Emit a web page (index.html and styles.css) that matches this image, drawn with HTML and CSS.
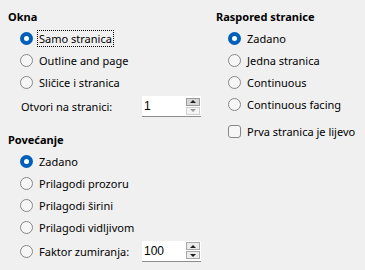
FILE: index.html
```html
<!DOCTYPE html>
<html lang="hr">
<head>
<meta charset="utf-8">
<link rel="stylesheet" href="styles.css">
</head>
<body>
<div class="page">
  <div class="col col-left">
    <div class="heading">Okna</div>
    <div class="list">
      <div class="row"><span class="radio on"></span><span class="label focus">Samo stranica</span></div>
      <div class="row"><span class="radio"></span><span class="label">Outline and page</span></div>
      <div class="row"><span class="radio"></span><span class="label">Sličice i stranica</span></div>
      <div class="row spin-row top-spin">
        <span class="label plain">Otvori na stranici:</span>
        <div class="spin">
          <div class="spin-field">1</div>
          <div class="spin-btns">
            <span class="sbtn up active"><i class="arr-up"></i></span>
            <span class="sbtn down disabled"><i class="arr-down"></i></span>
          </div>
        </div>
      </div>
    </div>
    <div class="heading heading-2">Povećanje</div>
    <div class="list">
      <div class="row"><span class="radio on"></span><span class="label">Zadano</span></div>
      <div class="row"><span class="radio"></span><span class="label">Prilagodi prozoru</span></div>
      <div class="row"><span class="radio"></span><span class="label">Prilagodi širini</span></div>
      <div class="row"><span class="radio"></span><span class="label">Prilagodi vidljivom</span></div>
      <div class="row spin-row bottom-spin">
        <span class="radio"></span><span class="label">Faktor zumiranja:</span>
        <div class="spin">
          <div class="spin-field">100</div>
          <div class="spin-btns">
            <span class="sbtn up"><i class="arr-up"></i></span>
            <span class="sbtn down"><i class="arr-down"></i></span>
          </div>
        </div>
      </div>
    </div>
  </div>
  <div class="col col-right">
    <div class="heading">Raspored stranice</div>
    <div class="list">
      <div class="row"><span class="radio on"></span><span class="label">Zadano</span></div>
      <div class="row"><span class="radio"></span><span class="label">Jedna stranica</span></div>
      <div class="row"><span class="radio"></span><span class="label">Continuous</span></div>
      <div class="row"><span class="radio"></span><span class="label">Continuous facing</span></div>
      <div class="row check-row"><span class="check"></span><span class="label">Prva stranica je lijevo</span></div>
    </div>
  </div>
</div>
</body>
</html>
```
FILE: styles.css
```css
html, body {
  margin: 0;
  padding: 0;
  background: #f0f0f0;
}
body {
  font-family: "Noto Sans", "Open Sans", sans-serif;
  font-size: 11px;
  color: #000;
  width: 365px;
  height: 270px;
  overflow: hidden;
}
.page {
  display: grid;
  grid-template-columns: 208px 1fr;
  padding-top: 9px;
}
.col-left { padding-left: 8px; }
.col-right { padding-left: 8px; }
.heading {
  font-weight: bold;
  height: 16px;
  line-height: 16px;
}
.heading-2 { margin-top: 12px; }
.list {
  margin-top: 2px;
  padding-left: 12px;
}
.row {
  height: 22px;
  display: flex;
  align-items: center;
}
.radio {
  box-sizing: border-box;
  width: 13px;
  height: 13px;
  border-radius: 50%;
  border: 1px solid #878787;
  background: #f6f6f6;
  flex: none;
  position: relative;
}
.radio.on {
  border: none;
  background: #005fb8;
}
.radio.on::after {
  content: "";
  position: absolute;
  left: 4px;
  top: 4px;
  width: 5px;
  height: 5px;
  border-radius: 50%;
  background: #fff;
}
.check {
  box-sizing: border-box;
  width: 13px;
  height: 13px;
  border-radius: 3px;
  border: 1px solid #878787;
  background: #f6f6f6;
  flex: none;
}
.label {
  margin-left: 4px;
  padding: 0 1px;
  line-height: 15px;
  border: 1px dotted transparent;
  white-space: nowrap;
}
.label.plain { margin-left: -1px; }
.label.focus { border-color: #000; }
.spin-row.top-spin { height: 27px; }
.spin-row.bottom-spin { height: 26px; }
.spin {
  margin-left: auto;
  margin-right: 7px;
  display: flex;
  background: #fff;
  border-bottom: 1px solid #8d8d8d;
  height: 20px;
  box-sizing: content-box;
}
.spin-field {
  width: 41px;
  padding-left: 2px;
  font-size: 12px;
  line-height: 20px;
  font-family: "Liberation Sans", Arial, sans-serif;
}
.spin-btns {
  width: 15px;
  display: flex;
  flex-direction: column;
  justify-content: center;
  gap: 1px;
  padding-left: 1px;
}
.sbtn {
  box-sizing: border-box;
  width: 14px;
  height: 8px;
  border: 1px solid #a9a9a9;
  background: #ececec;
  display: flex;
  align-items: center;
  justify-content: center;
}
.sbtn.active { background: #d6d6d6; border-color: #9a9a9a; }
.sbtn.disabled { border-color: #d0d0d0; background: #f4f4f4; }
.arr-up {
  width: 0; height: 0;
  border-left: 3px solid transparent;
  border-right: 3px solid transparent;
  border-bottom: 3px solid #1e1e1e;
}
.arr-down {
  width: 0; height: 0;
  border-left: 3px solid transparent;
  border-right: 3px solid transparent;
  border-top: 3px solid #1e1e1e;
}
.sbtn.disabled .arr-down { border-top-color: #9a9a9a; }
.check-row { margin-top: 5px; }
```
